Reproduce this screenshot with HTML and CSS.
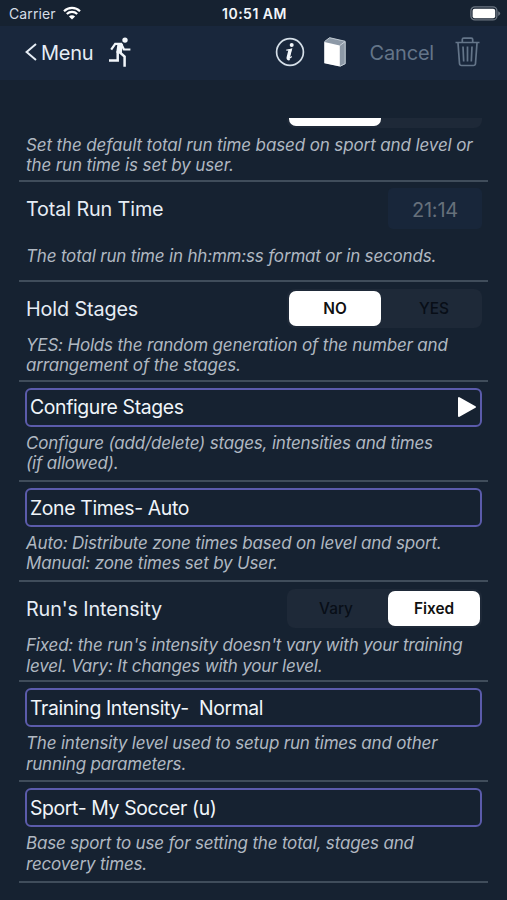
FILE: index.html
```
<!DOCTYPE html>
<html lang="en">

<head>
    <meta charset="UTF-8">
    <meta name="viewport" content="width=device-width, initial-scale=1.0">
    <title>Run Setup</title>
    <link rel="stylesheet" href="styles.css">
</head>

<body>
    <!-- Status bar -->
    <div class="status-bar">
        <div class="carrier">
            <span>Carrier</span>
            <svg class="wifi" viewBox="0 0 18 14" width="18" height="14">
                <path d="M1 5.2a11.4 11.4 0 0 1 16 0M3.8 8a7.5 7.5 0 0 1 10.4 0" fill="none" stroke="#fff" stroke-width="2.2"/>
                <path d="M9 13.6L5.9 10.5a4.4 4.4 0 0 1 6.2 0z" fill="#fff"/>
            </svg>
        </div>
        <span class="clock">10:51 AM</span>
        <svg class="battery" viewBox="0 0 31 15" width="31" height="15">
            <rect x="0.9" y="0.9" width="26" height="13" rx="4" fill="none" stroke="#6c7682" stroke-width="1.3"/>
            <rect x="2.6" y="2.7" width="22.6" height="9.6" rx="2" fill="#fff"/>
            <path d="M28.2 5.3q2 .8 2 2.3t-2 2.3z" fill="#6c7682"/>
        </svg>
    </div>

    <!-- Navigation -->
    <div class="nav-bar">
        <div class="nav-left">
            <svg viewBox="0 0 12 18" width="12" height="18">
                <path d="M11 1L1.6 9L11 17" fill="none" stroke="#e6edf5" stroke-width="2"/>
            </svg>
            <span class="menu">Menu</span>
            <svg class="runner" viewBox="0 0 24 31" width="24" height="31">
                <circle cx="17" cy="3.1" r="2.7" fill="#f2f6fa"/>
                <path d="M3.2 12.6L7.2 6.9H13.2L16 12.5H22.4" fill="none" stroke="#f2f6fa" stroke-width="2.2"/>
                <path d="M9.6 6L14.9 7L13.8 16.5L8.2 15.5z" fill="#f2f6fa"/>
                <path d="M9.7 14.5V23.6H1M11.4 15L16.6 19.6V29.8" fill="none" stroke="#f2f6fa" stroke-width="2.5"/>
            </svg>
        </div>
        <div class="nav-right">
            <svg viewBox="0 0 30 30" width="30" height="30">
                <circle cx="15" cy="15" r="13.4" fill="none" stroke="#d5dfe8" stroke-width="1.7"/>
                <circle cx="16.7" cy="7.9" r="2" fill="#f2f6fa"/>
                <path d="M11.3 13.2q3-.3 5.2-1.1l-2.3 8.7q-.2 1 2.5-1.3" fill="none" stroke="#f2f6fa" stroke-width="1.2"/>
                <path d="M15.1 12.4L13 20.8q-.2 1.6 1.5.9" fill="none" stroke="#f2f6fa" stroke-width="3"/>
            </svg>
            <svg class="book" viewBox="0 0 22 30" width="22" height="30">
                <path d="M.3 4.7L5.6.4L21.5 4.2V27L16.3 29.6L.3 26.1z" fill="#8d99a7"/>
                <path d="M.3 5L15.8 8.4V29.6L.3 26.2z" fill="#fff"/>
                <path d="M.5 4.5L5.6.7L21 4.2M16 29.3L21.2 26.7V4.5L16 8.4" fill="none" stroke="#d8dfe6" stroke-width=".8"/>
            </svg>
            <span class="cancel">Cancel</span>
            <svg class="trash" viewBox="0 0 25 30" width="25" height="30">
                <path d="M.5 5.5H24.5M7.3 5V2.6q0-1.5 1.5-1.5h7.4q1.5 0 1.5 1.5V5M3 6L4.5 26.5q.2 2 2 2h12q1.8 0 2-2L22 6M8 9.5L8.7 24.5M12.5 9.5V24.5M17 9.5L16.3 24.5" fill="none" stroke="#647589" stroke-width="1.7"/>
            </svg>
        </div>
    </div>

    <!-- Settings list, scrolled part of the way down -->
    <div class="settings">
        <div class="row">
            <div class="control">
                <span class="label"></span>
                <div class="segment">
                    <span class="option selected"></span>
                    <span class="option"></span>
                </div>
            </div>
            <p class="hint long">Set the default total run time based on sport and level or<br>the run time is set by user.</p>
        </div>

        <div class="row">
            <div class="control">
                <span class="label">Total Run Time</span>
                <span class="time">21:14</span>
            </div>
            <p class="hint single">The total run time in hh:mm:ss format or in seconds.</p>
        </div>

        <div class="row">
            <div class="control">
                <span class="label">Hold Stages</span>
                <div class="segment">
                    <span class="option selected">NO</span>
                    <span class="option">YES</span>
                </div>
            </div>
            <p class="hint">YES: Holds the random generation of the number and<br>arrangement of the stages.</p>
        </div>

        <div class="row">
            <div class="picker">
                <span>Configure Stages</span>
                <svg viewBox="0 0 20 22" width="20" height="22">
                    <path d="M2 2V20L18 11z" fill="#fff" stroke="#fff" stroke-width="2" stroke-linejoin="round"/>
                </svg>
            </div>
            <p class="hint">Configure (add/delete) stages, intensities and times<br>(if allowed).</p>
        </div>

        <div class="row">
            <div class="picker">Zone Times- Auto</div>
            <p class="hint">Auto: Distribute zone times based on level and sport.<br>Manual: zone times set by User.</p>
        </div>

        <div class="row">
            <div class="control">
                <span class="label">Run's Intensity</span>
                <div class="segment wide">
                    <span class="option">Vary</span>
                    <span class="option selected">Fixed</span>
                </div>
            </div>
            <p class="hint">Fixed: the run's intensity doesn't vary with your training<br>level. Vary: It changes with your level.</p>
        </div>

        <div class="row">
            <div class="picker">Training Intensity-&nbsp; Normal</div>
            <p class="hint">The intensity level used to setup run times and other<br>running parameters.</p>
        </div>

        <div class="row">
            <div class="picker">Sport- My Soccer (u)</div>
            <p class="hint">Base sport to use for setting the total, stages and<br>recovery times.</p>
        </div>
    </div>
</body>

</html>
```
FILE: styles.css
```
* {
    box-sizing: border-box;
}

html {
    background-color: #162231;
}

body {
    margin: 0;
    height: 900px;
    overflow: hidden;
    color: #e6edf5;
    font-family: Inter, "Liberation Sans", sans-serif;
}

svg {
    display: block;
    flex-shrink: 0;
}

.status-bar {
    display: grid;
    grid-template-columns: 1fr auto 1fr;
    align-items: center;
    height: 26px;
    padding: 1px 6px 0 9px;
}

.carrier {
    display: flex;
    align-items: center;
    gap: 7px;
    font-size: 14px;
    letter-spacing: 0.1px;
    color: #d5dde6;
}

.wifi {
    margin-top: -2px;
}

.clock {
    margin-right: 1px;
    font-size: 14px;
    font-weight: 600;
    letter-spacing: 0.5px;
    color: #f2f6fa;
}

.battery {
    justify-self: end;
}

.nav-bar {
    display: flex;
    justify-content: space-between;
    height: 54px;
    padding: 0 27px 2px 25px;
    background-color: #19273c;
    font-size: 20px;
}

.nav-left,
.nav-right {
    display: flex;
    align-items: center;
}

.menu {
    margin-left: 4px;
    padding-top: 2px;
    letter-spacing: -0.3px;
}

.runner {
    margin-left: 15px;
}

.book {
    margin-left: 19px;
}

.cancel {
    margin-left: 24px;
    padding-top: 2px;
    letter-spacing: -0.2px;
    color: #647589;
}

.trash {
    margin-left: 21px;
}

.settings {
    height: 782px;
    margin-top: 38px;
    padding: 0 19px;
    overflow: hidden;
}

.row {
    height: 100.15px;
    padding: 6px 6px 0;
    border-bottom: 2px solid #404d5b;
}

/* first row sits partly under the header */
.row:first-child {
    margin-top: -36.5px;
}

.control {
    display: flex;
    align-items: center;
    justify-content: space-between;
    height: 41px;
}

.label {
    padding: 1px 0 0 1px;
    font-size: 19.8px;
    letter-spacing: -0.12px;
}

.segment {
    display: flex;
    width: 195px;
    height: 39px;
    padding: 2px 3px;
    border-radius: 8px;
    background-color: #1e2938;
}

.segment:not(.wide) .selected {
    margin: 0 8px 0 -1px;
}

.segment.wide {
    padding: 2px;
}

.segment.wide .selected {
    margin-left: 5px;
}

.option {
    display: flex;
    flex: 1;
    align-items: center;
    justify-content: center;
    border-radius: 7px;
    font-size: 15.4px;
    font-weight: 500;
    color: #080e17;
}

.option.selected {
    flex: none;
    width: 92px;
    background-color: #fff;
    font-weight: 600;
    color: #111;
}

.time {
    width: 94px;
    height: 41px;
    border-radius: 5px;
    background-color: #18263a;
    font-size: 20px;
    letter-spacing: -0.2px;
    line-height: 45px;
    text-align: center;
    color: #66707b;
}

.picker {
    display: flex;
    align-items: center;
    justify-content: space-between;
    height: 39px;
    padding: 0 3px;
    border: 2px solid #5b5bab;
    border-radius: 6px;
    font-size: 19.4px;
    letter-spacing: -0.36px;
    color: #f0f5fa;
}

.hint {
    margin: 6px 0 0 1px;
    font-size: 17px;
    font-style: italic;
    letter-spacing: -0.18px;
    line-height: 20.3px;
    white-space: nowrap;
    color: #b0b8c1;
}

.hint.long {
    letter-spacing: -0.12px;
}

.hint.single {
    margin-top: 17px;
}
```
